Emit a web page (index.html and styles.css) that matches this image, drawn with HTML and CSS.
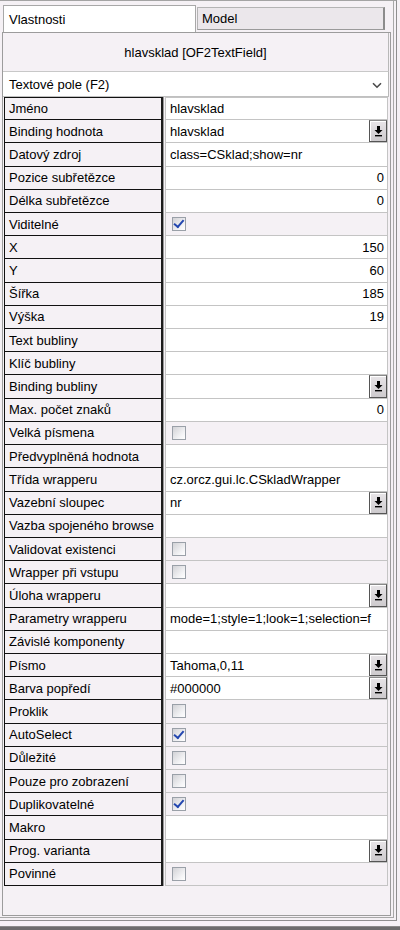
FILE: index.html
```html
<!DOCTYPE html>
<html lang="cs">
<head>
<meta charset="utf-8">
<title>Vlastnosti</title>
<link rel="stylesheet" href="styles.css">
</head>
<body>
<div class="window">
  <div class="frame">
    <div class="inner">
      <div class="tabs">
        <div class="tab active">Vlastnosti</div>
        <div class="tab">Model</div>
      </div>
      <div class="panel">
        <div class="title">hlavsklad [OF2TextField]</div>
        <div class="select">
          <span class="select-text">Textové pole (F2)</span>
          <svg class="chev" width="10" height="7" viewBox="0 0 10 7"><path d="M1 1.2 L5 5.2 L9 1.2" fill="none" stroke="#4a4a4a" stroke-width="1.6"/></svg>
        </div>
        <div class="props">
          <div class="row"><div class="lbl">Jméno</div><div class="val"><span class="txt">hlavsklad</span></div></div>
          <div class="row"><div class="lbl">Binding hodnota</div><div class="val"><span class="txt">hlavsklad</span><span class="btn"><svg width="9" height="11" viewBox="0 0 9 11"><rect x="3" y="0" width="3" height="4"/><path d="M0.5 4h8L4.5 8z"/><rect x="1" y="9" width="7" height="1.4"/></svg></span></div></div>
          <div class="row"><div class="lbl">Datový zdroj</div><div class="val"><span class="txt">class=CSklad;show=nr</span></div></div>
          <div class="row"><div class="lbl">Pozice subřetězce</div><div class="val num"><span class="txt">0</span></div></div>
          <div class="row"><div class="lbl">Délka subřetězce</div><div class="val num"><span class="txt">0</span></div></div>
          <div class="row"><div class="lbl">Viditelné</div><div class="val chk"><span class="cb on"></span></div></div>
          <div class="row"><div class="lbl">X</div><div class="val num"><span class="txt">150</span></div></div>
          <div class="row"><div class="lbl">Y</div><div class="val num"><span class="txt">60</span></div></div>
          <div class="row"><div class="lbl">Šířka</div><div class="val num"><span class="txt">185</span></div></div>
          <div class="row"><div class="lbl">Výška</div><div class="val num"><span class="txt">19</span></div></div>
          <div class="row"><div class="lbl">Text bubliny</div><div class="val"><span class="txt"></span></div></div>
          <div class="row"><div class="lbl">Klíč bubliny</div><div class="val"><span class="txt"></span></div></div>
          <div class="row"><div class="lbl">Binding bubliny</div><div class="val"><span class="txt"></span><span class="btn"><svg width="9" height="11" viewBox="0 0 9 11"><rect x="3" y="0" width="3" height="4"/><path d="M0.5 4h8L4.5 8z"/><rect x="1" y="9" width="7" height="1.4"/></svg></span></div></div>
          <div class="row"><div class="lbl">Max. počet znaků</div><div class="val num"><span class="txt">0</span></div></div>
          <div class="row"><div class="lbl">Velká písmena</div><div class="val chk"><span class="cb"></span></div></div>
          <div class="row"><div class="lbl">Předvyplněná hodnota</div><div class="val"><span class="txt"></span></div></div>
          <div class="row"><div class="lbl">Třída wrapperu</div><div class="val"><span class="txt">cz.orcz.gui.lc.CSkladWrapper</span></div></div>
          <div class="row"><div class="lbl">Vazební sloupec</div><div class="val"><span class="txt">nr</span><span class="btn"><svg width="9" height="11" viewBox="0 0 9 11"><rect x="3" y="0" width="3" height="4"/><path d="M0.5 4h8L4.5 8z"/><rect x="1" y="9" width="7" height="1.4"/></svg></span></div></div>
          <div class="row"><div class="lbl">Vazba spojeného browse</div><div class="val"><span class="txt"></span></div></div>
          <div class="row"><div class="lbl">Validovat existenci</div><div class="val chk"><span class="cb"></span></div></div>
          <div class="row"><div class="lbl">Wrapper při vstupu</div><div class="val chk"><span class="cb"></span></div></div>
          <div class="row"><div class="lbl">Úloha wrapperu</div><div class="val"><span class="txt"></span><span class="btn"><svg width="9" height="11" viewBox="0 0 9 11"><rect x="3" y="0" width="3" height="4"/><path d="M0.5 4h8L4.5 8z"/><rect x="1" y="9" width="7" height="1.4"/></svg></span></div></div>
          <div class="row"><div class="lbl">Parametry wrapperu</div><div class="val"><span class="txt">mode=1;style=1;look=1;selection=f</span></div></div>
          <div class="row"><div class="lbl">Závislé komponenty</div><div class="val"><span class="txt"></span></div></div>
          <div class="row"><div class="lbl">Písmo</div><div class="val"><span class="txt">Tahoma,0,11</span><span class="btn"><svg width="9" height="11" viewBox="0 0 9 11"><rect x="3" y="0" width="3" height="4"/><path d="M0.5 4h8L4.5 8z"/><rect x="1" y="9" width="7" height="1.4"/></svg></span></div></div>
          <div class="row"><div class="lbl">Barva popředí</div><div class="val"><span class="txt">#000000</span><span class="btn"><svg width="9" height="11" viewBox="0 0 9 11"><rect x="3" y="0" width="3" height="4"/><path d="M0.5 4h8L4.5 8z"/><rect x="1" y="9" width="7" height="1.4"/></svg></span></div></div>
          <div class="row"><div class="lbl">Proklik</div><div class="val chk"><span class="cb"></span></div></div>
          <div class="row"><div class="lbl">AutoSelect</div><div class="val chk"><span class="cb on"></span></div></div>
          <div class="row"><div class="lbl">Důležité</div><div class="val chk"><span class="cb"></span></div></div>
          <div class="row"><div class="lbl">Pouze pro zobrazení</div><div class="val chk"><span class="cb"></span></div></div>
          <div class="row"><div class="lbl">Duplikovatelné</div><div class="val chk"><span class="cb on"></span></div></div>
          <div class="row"><div class="lbl">Makro</div><div class="val"><span class="txt"></span></div></div>
          <div class="row"><div class="lbl">Prog. varianta</div><div class="val"><span class="txt"></span><span class="btn"><svg width="9" height="11" viewBox="0 0 9 11"><rect x="3" y="0" width="3" height="4"/><path d="M0.5 4h8L4.5 8z"/><rect x="1" y="9" width="7" height="1.4"/></svg></span></div></div>
          <div class="row"><div class="lbl">Povinné</div><div class="val chk"><span class="cb"></span></div></div>
        </div>
      </div>
    </div>
  </div>
  <div class="gap"></div>
  <div class="status"></div>
</div>
</body>
</html>
```

FILE: styles.css
```css
* { box-sizing: border-box; }

html, body {
  margin: 0;
  padding: 0;
  background: #f5f1f5;
}

body {
  font-family: "Liberation Sans", Arial, sans-serif;
  font-size: 13px;
  color: #000;
}

.window {
  width: 400px;
  height: 930px;
  display: flex;
  flex-direction: column;
  background: #f5f1f5;
}

.frame {
  width: 397px;
  height: 921px;
  border-top: 1px solid #a4a4a4;
  border-right: 1px solid #8e8e8e;
  border-bottom: 1px solid #8e8e8e;
  padding-bottom: 2px;
  display: flex;
  flex-direction: column;
}

.inner {
  width: 394px;
  flex: 1;
  border-right: 1px solid #a8a8a8;
  border-bottom: 1px solid #a8a8a8;
  padding-top: 4px;
  padding-bottom: 1px;
  display: flex;
  flex-direction: column;
}

.gap { height: 5px; }

.status {
  height: 4px;
  background: #6c6c6c;
  border-top: 1px solid #8a8a8a;
}

/* tabs */
.tabs {
  display: flex;
  align-items: flex-start;
  height: 27px;
}

.tab {
  display: flex;
  align-items: center;
}

.tab.active {
  margin-left: 3px;
  width: 193px;
  height: 27px;
  background: #ffffff;
  border: 1px solid #a8a8a8;
  border-bottom: none;
  padding-left: 5px;
}

.tab:not(.active) {
  margin-left: 1px;
  margin-top: 2px;
  width: 188px;
  height: 23px;
  background: #ebe7eb;
  border: 1px solid #b4b4b4;
  border-right: 2px solid #8c8c8c;
  border-bottom: 1px solid #9a9a9a;
  padding-left: 4px;
}

/* panel */
.panel {
  flex: 1;
  margin-left: 2px;
  width: 389px;
  border: 1px solid #9c9c9c;
  display: flex;
  flex-direction: column;
}

.title {
  height: 39px;
  width: 386px;
  display: flex;
  align-items: center;
  justify-content: center;
  border-right: 1px solid #b8b8b8;
  border-bottom: 1px solid #c8c8c8;
}

.select {
  height: 25px;
  width: 386px;
  background: #ffffff;
  border-right: 1px solid #b8b8b8;
  border-bottom: 1px solid #c0c0c0;
  display: flex;
  align-items: center;
  padding-left: 6px;
  padding-right: 6px;
}

.select-text { flex: 1; }

.chev { display: block; margin-top: 3px; }

/* property grid */
.props {
  margin-left: 1px;
  height: 789px;
  display: grid;
  grid-template-rows: repeat(34, 1fr);
}

.row {
  display: grid;
  grid-template-columns: 159px 223px;
  column-gap: 2px;
  min-height: 0;
}

.lbl {
  border-left: 1px solid #111;
  border-right: 2px solid #1c1c1c;
  border-bottom: 1px solid #111;
  padding-left: 4px;
  display: flex;
  align-items: center;
  white-space: nowrap;
  overflow: hidden;
  box-shadow: 1px 0 0 #9a9a9a;
}

.row:first-child .lbl { border-top: 1px solid #111; }

.val {
  background: #ffffff;
  border-left: 1px solid #c4c4c4;
  border-right: 1px solid #c4c4c4;
  border-bottom: 1px solid #c4c4c4;
  display: flex;
  align-items: stretch;
  overflow: hidden;
}

.row:first-child .val { border-top: 1px solid #c4c4c4; }

.val .txt {
  flex: 1;
  display: flex;
  align-items: center;
  padding: 0 3px 0 4px;
  white-space: nowrap;
  overflow: hidden;
}

.val.num .txt { justify-content: flex-end; }

.val.chk {
  background: transparent;
  align-items: center;
  padding-left: 6px;
}

.btn {
  width: 18px;
  background: linear-gradient(#e8e5e8, #cdcacd);
  border: 1px solid #555555;
  border-top-color: #8a8a8a;
  box-shadow: inset 1px 1px 0 #ffffff;
  display: flex;
  align-items: center;
  justify-content: center;
}

.btn svg { display: block; fill: #000; }

.cb {
  width: 14px;
  height: 14px;
  border: 1px solid #9aa0a8;
  background: linear-gradient(135deg, #d2d2d6, #f4f4f6 70%, #ffffff);
  display: flex;
  align-items: center;
  justify-content: center;
}

.cb.on::after {
  content: "";
  width: 4px;
  height: 8px;
  border-right: 2px solid #2447b0;
  border-bottom: 2px solid #2447b0;
  transform: rotate(40deg) translate(-1px, -1px);
}
```
